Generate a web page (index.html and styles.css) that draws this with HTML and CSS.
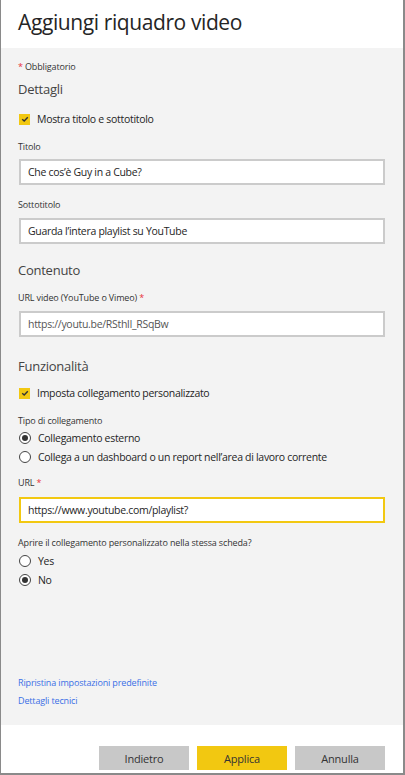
FILE: index.html
```html
<!DOCTYPE html>
<html lang="it">
<head>
<meta charset="utf-8">
<title>Aggiungi riquadro video</title>
<link rel="stylesheet" href="styles.css">
</head>
<body>
<div class="panel">
  <header class="head">
    <h1 class="title">Aggiungi riquadro video</h1>
  </header>
  <main class="body">
    <div class="req"><span class="star">*</span> Obbligatorio</div>
    <h2 class="sec sec-1">Dettagli</h2>
    <label class="check row-check1">
      <span class="box"><svg viewBox="0 0 10 10" width="10" height="10"><path d="M2.2 5.2 L4.2 7 L7.8 3.2" fill="none" stroke="#333" stroke-width="1.4"/></svg></span>
      <span>Mostra titolo e sottotitolo</span>
    </label>
    <div class="lbl l-titolo">Titolo</div>
    <div class="input i-titolo">Che cos’è Guy in a Cube?</div>
    <div class="lbl l-sotto">Sottotitolo</div>
    <div class="input i-sotto">Guarda l’intera playlist su YouTube</div>

    <h2 class="sec sec-2">Contenuto</h2>
    <div class="lbl l-url">URL video (YouTube o Vimeo) <span class="star">*</span></div>
    <div class="input i-url muted">https://youtu.be/RSthlI_RSqBw</div>

    <h2 class="sec sec-3">Funzionalità</h2>
    <label class="check row-check2">
      <span class="box"><svg viewBox="0 0 10 10" width="10" height="10"><path d="M2.2 5.2 L4.2 7 L7.8 3.2" fill="none" stroke="#333" stroke-width="1.4"/></svg></span>
      <span>Imposta collegamento personalizzato</span>
    </label>
    <div class="lbl l-tipo">Tipo di collegamento</div>
    <div class="radio r-1"><span class="dot on"></span><span>Collegamento esterno</span></div>
    <div class="radio r-2"><span class="dot"></span><span>Collega a un dashboard o un report nell’area di lavoro corrente</span></div>
    <div class="lbl l-link">URL <span class="star">*</span></div>
    <div class="input i-link focus">https://www.youtube.com/playlist?</div>
    <div class="lbl l-apri">Aprire il collegamento personalizzato nella stessa scheda?</div>
    <div class="radio r-3"><span class="dot"></span><span>Yes</span></div>
    <div class="radio r-4"><span class="dot on"></span><span>No</span></div>

    <div class="links">
      <a class="link" href="#">Ripristina impostazioni predefinite</a>
      <a class="link" href="#">Dettagli tecnici</a>
    </div>
  </main>
  <footer class="foot">
    <button class="btn">Indietro</button>
    <button class="btn primary">Applica</button>
    <button class="btn">Annulla</button>
  </footer>
</div>
</body>
</html>
```

FILE: styles.css
```css
* { box-sizing: border-box; }
html, body { margin: 0; padding: 0; background: #fff; }
body { font-family: "Open Sans", "Noto Sans", sans-serif; color: #333; }

.panel {
  width: 405px;
  height: 775px;
  display: flex;
  flex-direction: column;
  border-left: 1px solid #8a8a8a;
  border-right: 2px solid #8a8a8a;
  border-bottom: 2px solid #8a8a8a;
  background: #fff;
}

.head { height: 48px; padding-left: 17px; background: #fff; }
.title {
  margin: 0;
  font-weight: 400;
  font-size: 21px;
  line-height: 44px;
  color: #252525;
  letter-spacing: -0.4px;
}

.body {
  height: 677px;
  background: #f3f3f3;
  padding: 0 18px 17px 17px;
  display: flex;
  flex-direction: column;
  font-size: 10.5px;
  letter-spacing: -0.3px;
}

.req { margin-top: 12px; line-height: 14px; font-size: 9px; color: #333; letter-spacing: -0.15px; }
.star { color: #e8303a; }

.sec { margin: 0; font-weight: 400; font-size: 13px; line-height: 18px; color: #444; letter-spacing: -0.25px; }
.sec-1 { margin-top: 6px; }
.sec-2 { margin-top: 17px; }
.sec-3 { margin-top: 20px; }

.check { display: flex; align-items: center; height: 16px; gap: 7px; font-size: 10.5px; color: #252525; }
.row-check1 { margin-top: 13px; }
.row-check2 { margin-top: 10px; }
.box { width: 11px; height: 11px; background: #f2c811; display: flex; align-items: center; justify-content: center; margin-left: 1px; }
.box svg { display: block; }

.lbl { line-height: 14px; font-size: 9px; color: #333; letter-spacing: -0.15px; }
.l-titolo { margin-top: 13px; }
.l-sotto { margin-top: 13px; }
.l-url { margin-top: 12px; }
.l-tipo { margin-top: 13px; }
.l-link { margin-top: 10px; }
.l-apri { margin-top: 13px; }

.input {
  height: 26px;
  background: #fff;
  border: 2px solid #cbcbcb;
  padding-left: 7px;
  font-size: 10.5px;
  line-height: 22px;
  color: #252525;
  margin-left: 1px;
}
.i-titolo { margin-top: 5px; }
.i-sotto { margin-top: 6px; }
.i-url { margin-top: 6px; }
.i-link { margin-top: 7px; }
.muted { color: #555; }
.focus { border-color: #f2c811; }

.radio { display: flex; align-items: center; height: 18px; gap: 7px; font-size: 10.5px; color: #252525; }
.r-1 { margin-top: 1px; }
.r-2 { margin-top: 1px; }
.r-3 { margin-top: 2px; }
.r-4 { margin-top: 1px; }
.dot {
  width: 12px; height: 12px;
  border: 1px solid #444;
  border-radius: 50%;
  background: #fff;
  display: flex; align-items: center; justify-content: center;
  margin-left: 1px;
}
.dot.on::after { content: ""; width: 6px; height: 6px; border-radius: 50%; background: #333; }

.links { margin-top: auto; display: flex; flex-direction: column; gap: 4px; }
.link { line-height: 14px; font-size: 9px; color: #3a6fe6; text-decoration: none; letter-spacing: -0.15px; }

.foot {
  flex: 1;
  background: #fff;
  display: flex;
  justify-content: flex-end;
  align-items: flex-start;
  gap: 8px;
  padding: 21px 18px 0 0;
}
.btn {
  width: 90px;
  height: 24px;
  border: 1px solid #c8c8c8;
  background: #c8c8c8;
  font-family: inherit;
  font-size: 11px;
  letter-spacing: -0.2px;
  color: #333;
  padding: 0;
}
.btn.primary { background: #f2c811; border-color: #f2c811; }
```
